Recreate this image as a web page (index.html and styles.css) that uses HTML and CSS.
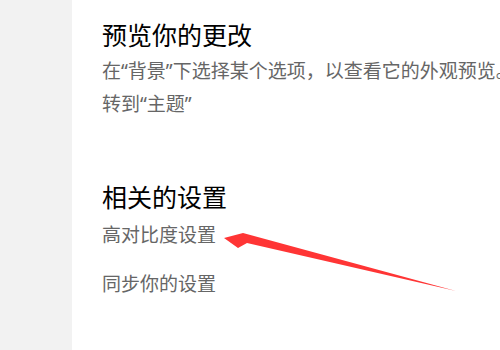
FILE: index.html
```
<!DOCTYPE html>
<html lang="zh-CN">
<head>
  <meta charset="utf-8"/>
  <title>背景</title>
  <link rel="stylesheet" href="styles.css">
</head>
<body>
  <div class="window">
    <div class="sidebar"></div>
    <div class="content">
      <h2 class="title">预览你的更改</h2>
      <p class="desc">在“背景”下选择某个选项，以查看它的外观预览。</p>
      <a class="link">转到“主题”</a>

      <h2 class="title related">相关的设置</h2>
      <a class="link">高对比度设置</a>
      <a class="link sync">同步你的设置</a>
    </div>
  </div>

  <!-- red annotation arrow -->
  <svg class="arrow" width="500" height="350" viewBox="0 0 500 350">
    <polygon points="224,238 243,233 456,291 247,243 238,248" fill="#ff3535"/>
  </svg>
</body>
</html>
```

FILE: styles.css
```
body {
  margin: 0;
  font-family: "Noto Sans", "Noto Sans CJK SC", sans-serif;
  background: #fff;
}
.window {
  display: flex;
  width: 500px;
  height: 350px;
  overflow: hidden;
}
.sidebar {
  width: 72px;
  flex: none;
  background: #f2f2f2;
}
.content {
  flex: 1;
  display: flex;
  flex-direction: column;
  align-items: flex-start;
  padding: 19px 0 0 30px;
  white-space: nowrap;
}
.title {
  margin: 0;
  font-size: 25px;
  font-weight: normal;
  line-height: 32px;
  color: #000;
}
.desc {
  margin: 4px 0 0 0;
  font-size: 19px;
  line-height: 33px;
  color: #666;
}
.link {
  display: block;
  font-size: 19px;
  line-height: 33px;
  color: #666;
  text-decoration: none;
}
.related {
  margin-top: 60px;
  margin-bottom: 6px;
}
.sync {
  margin-top: 16px;
}
.arrow {
  position: absolute;
  left: 0;
  top: 0;
}
```
